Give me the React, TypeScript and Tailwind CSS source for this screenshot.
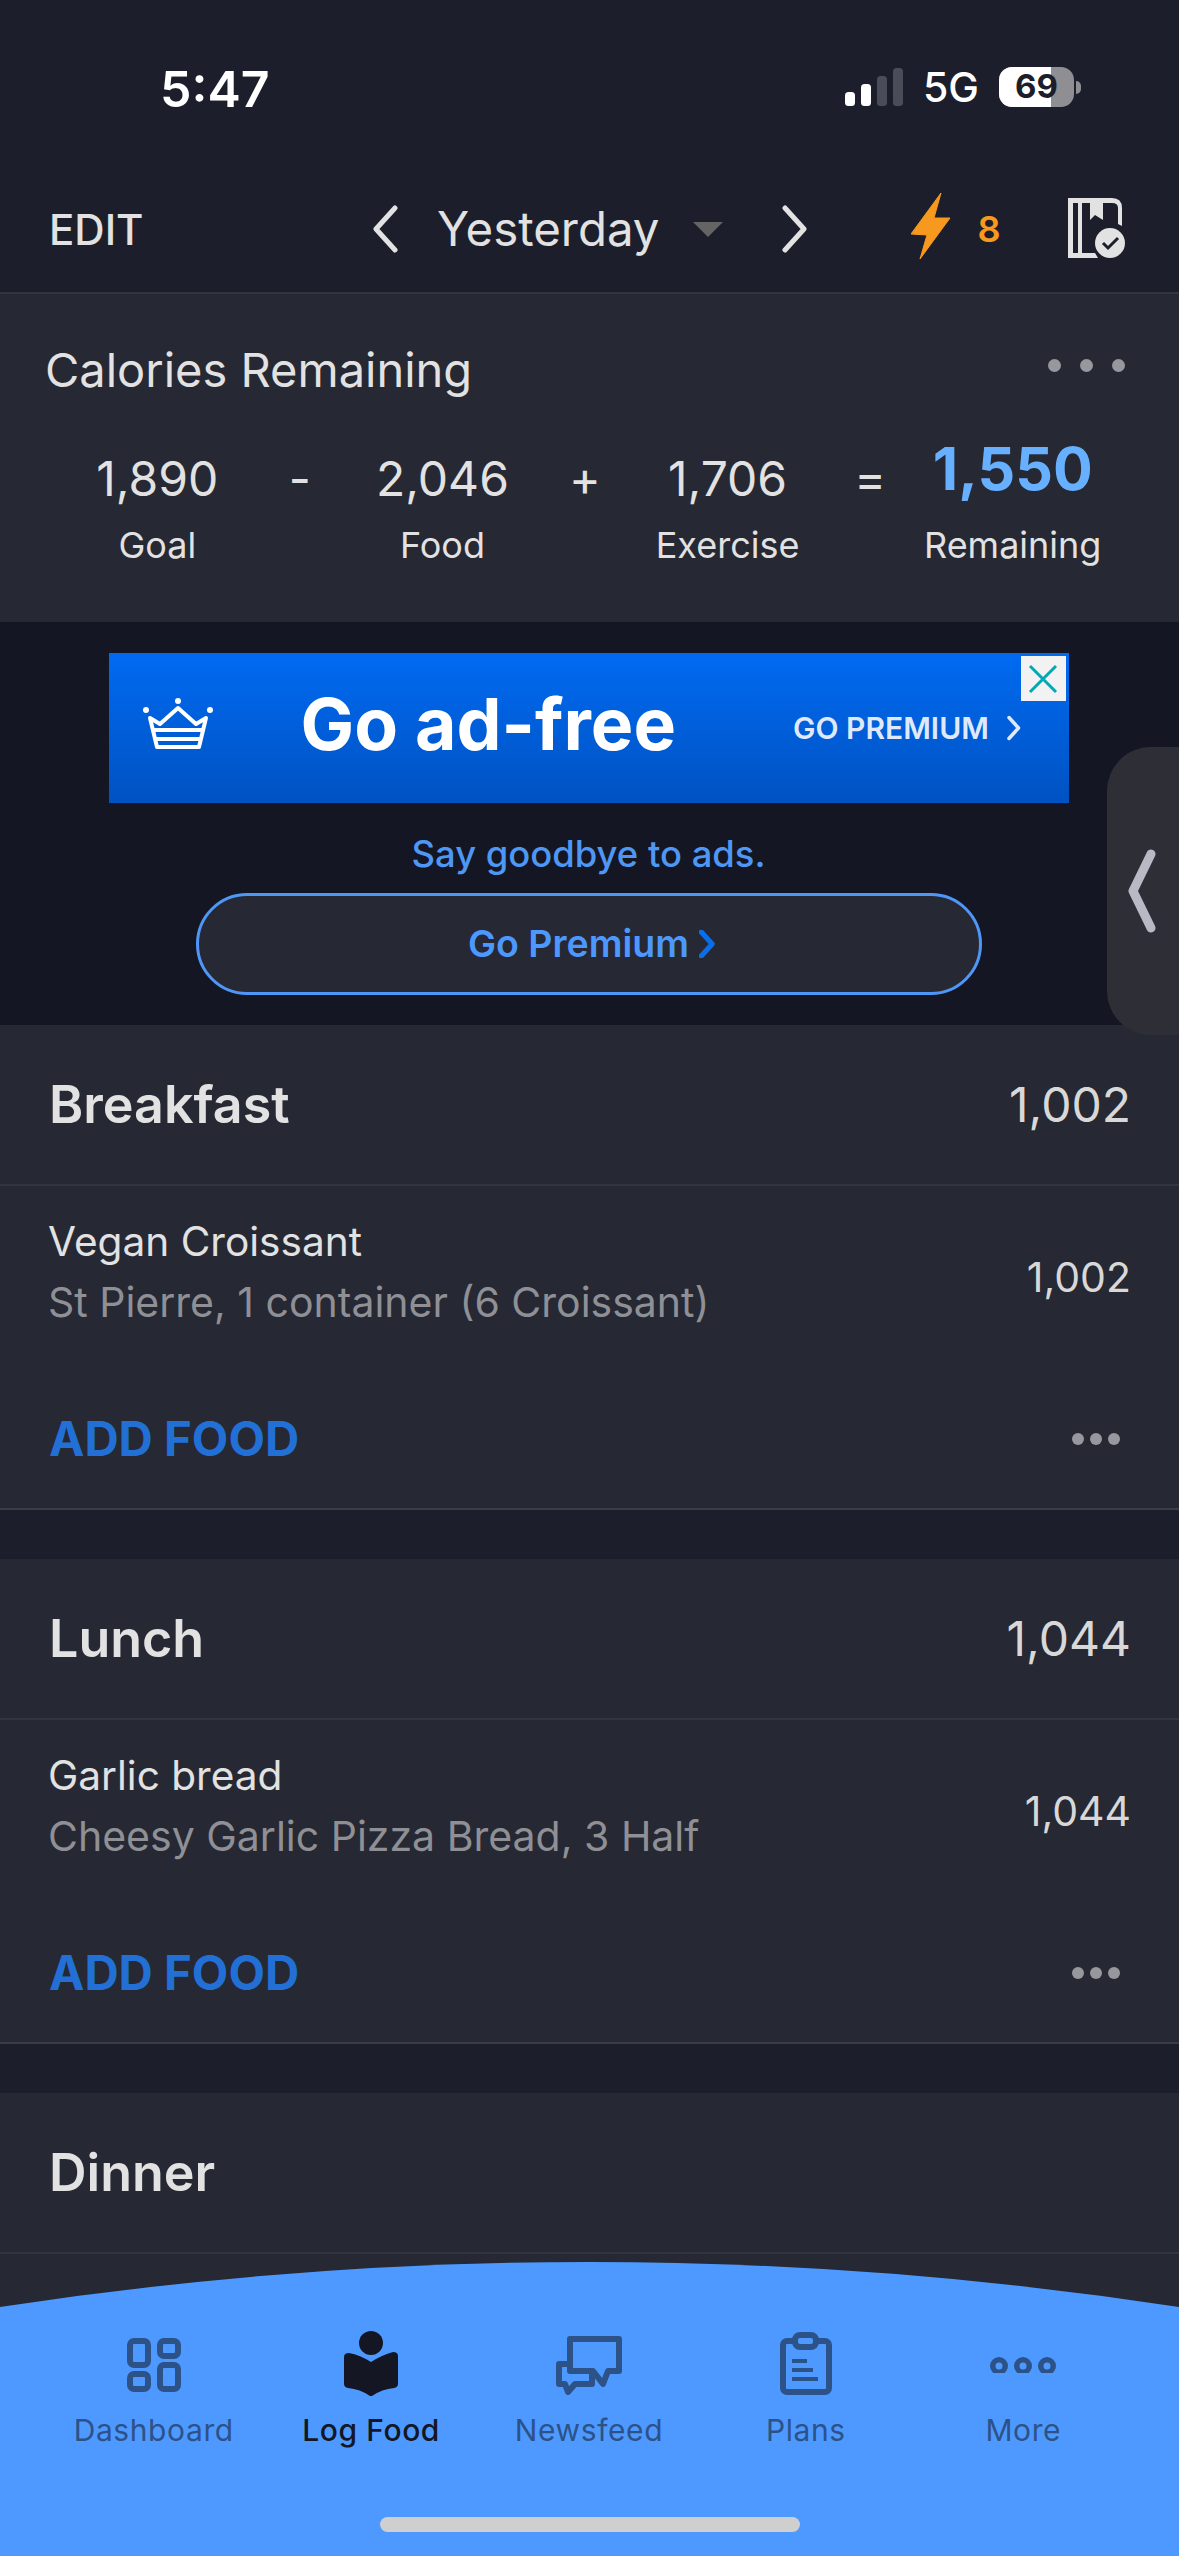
import React from "react";

const meals = [
  { name: "Breakfast", total: "1,002", food: "Vegan Croissant", detail: "St Pierre, 1 container (6 Croissant)", cals: "1,002" },
  { name: "Lunch", total: "1,044", food: "Garlic bread", detail: "Cheesy Garlic Pizza Bread, 3 Half", cals: "1,044" },
];

const summary = [
  { value: "1,890", label: "Goal" },
  { value: "-" },
  { value: "2,046", label: "Food" },
  { value: "+" },
  { value: "1,706", label: "Exercise" },
  { value: "=" },
  { value: "1,550", label: "Remaining", hot: true },
];

function Chevron({ flip, width = 5, className }: { flip?: boolean; width?: number; className?: string }) {
  return (
    <svg width="28" height="48" viewBox="0 0 28 48" className={className}>
      <path d={flip ? "M4 3 L23 24 L4 45" : "M24 3 L5 24 L24 45"} fill="none" stroke="currentColor" strokeWidth={width} strokeLinecap="round" strokeLinejoin="round" />
    </svg>
  );
}

function StatusBar() {
  return (
    <div className="h-[136px] flex items-start justify-between pt-[62px] pl-[160px] pr-[98px] text-white">
      <span className="text-[50px] leading-[54px] font-semibold">5:47</span>
      <div className="flex items-center gap-[20px] h-[50px]">
        <svg width="58" height="38" viewBox="0 0 58 38">
          <rect x="0" y="24" width="10" height="14" rx="3.5" fill="#fff" />
          <rect x="16" y="16" width="10" height="22" rx="3.5" fill="#fff" />
          <rect x="32" y="8" width="10" height="30" rx="3.5" fill="#4a4c57" />
          <rect x="48" y="0" width="10" height="38" rx="3.5" fill="#4a4c57" />
        </svg>
        <span className="text-[41px] leading-none font-medium">5G</span>
        <div className="flex items-center gap-[2px]">
          <div className="relative w-[75px] h-[40px] rounded-[13px] overflow-hidden bg-[#8e8e93]">
            <div className="h-full w-[52px] bg-white" />
            <span className="absolute inset-0 flex items-center justify-center text-[33px] font-bold text-[#1c1f2b]">69</span>
          </div>
          <div className="w-[5px] h-[13px] rounded-r-full bg-[#8e8e93]" />
        </div>
      </div>
    </div>
  );
}

function NavHeader() {
  return (
    <div className="h-[158px] border-b-2 border-[#32343e] flex items-center pt-[30px] pl-[49px] pr-[52px] text-[#e2e2e2]">
      <span className="text-[42px] font-medium w-[322px]">EDIT</span>
      <Chevron />
      <span className="text-[47.4px] ml-[38px]">Yesterday</span>
      <div className="ml-[34px] w-0 h-0 border-l-[15px] border-r-[15px] border-t-[15px] border-l-transparent border-r-transparent border-t-[#646464]" />
      <Chevron flip className="ml-[58px]" />
      <svg width="44" height="66" viewBox="0 0 44 66" className="ml-[102px] mb-[6px]" fill="#f7981f">
        <path d="M30 0 L0 41 L16 42 L9 66 L39 25 L23 25 Z" stroke="#f7981f" strokeWidth="1" strokeLinejoin="round" />
      </svg>
      <span className="text-[36px] font-semibold text-[#f7981f] ml-[22px] w-[92px]">8</span>
      <svg width="58" height="60" viewBox="0 0 58 60" fill="#e2e2e2" className="-ml-[1px] mb-[2px]">
        <path d="M0 0 H44 Q54 0 54 10 V28 L50 26 V10 Q50 5 44 5 H35 V22 L27 17 L22 22 V5 H14 V55 H27 L30 60 H0 Z M5 5 V55 H10 V5 Z" fillRule="evenodd" />
        <circle cx="42" cy="45" r="15" />
        <path d="M35 45 L40 50 L50 40" fill="none" stroke="#1c1f2b" strokeWidth="3" />
      </svg>
    </div>
  );
}

function CaloriesCard() {
  return (
    <div className="h-[328px] bg-[#262833] pl-[45px] pr-[54px] pt-[48px]">
      <div className="flex items-center justify-between">
        <span className="text-[47px] leading-[56px] text-[#e2e2e2]">Calories Remaining</span>
        <div className="flex gap-[19px] mb-[10px]">
          <div className="w-[13px] h-[13px] rounded-full bg-[#97989e]" />
          <div className="w-[13px] h-[13px] rounded-full bg-[#97989e]" />
          <div className="w-[13px] h-[13px] rounded-full bg-[#97989e]" />
        </div>
      </div>
      <div className="grid grid-cols-7 w-[998px] ml-[41px] mt-[45px]">
        {summary.map((s) => (
          <div key={s.value} className="flex flex-col items-center">
            <span className={s.hot ? "h-[72px] -mt-[10px] mb-[10px] text-[59px] leading-[72px] font-bold text-[#67b0ff]" : "h-[72px] text-[48px] leading-[72px] text-[#e2e2e2]"}>
              {s.value}
            </span>
            {s.label && <span className="mt-[8px] text-[36px] leading-[44px] text-[#e2e2e2]">{s.label}</span>}
          </div>
        ))}
      </div>
    </div>
  );
}

function AdBlock() {
  return (
    <div className="h-[403px] bg-[#141723] pt-[31px] pr-[2px] flex flex-col items-center">
      <div className="relative w-[960px] h-[150px] bg-gradient-to-b from-[#006bf2] to-[#0052c2] flex items-center">
        <svg width="70" height="52" viewBox="0 0 70 52" className="ml-[34px] mb-[8px]" fill="none" stroke="#fff" strokeWidth="4">
          <path d="M7 20 L17 26 L35 10 L53 26 L63 20 L56 49 H14 Z" strokeLinejoin="round" />
          <path d="M11 32 H59 M12 41 H58" />
          <circle cx="35" cy="3" r="3" fill="#fff" stroke="none" />
          <circle cx="3" cy="12" r="3" fill="#fff" stroke="none" />
          <circle cx="67" cy="12" r="3" fill="#fff" stroke="none" />
        </svg>
        <span className="ml-[88px] mb-[6px] text-[71.5px] font-bold text-white leading-none">Go ad-free</span>
        <span className="ml-[117px] text-[30px] font-semibold text-[#dfe9fb]">GO PREMIUM</span>
        <Chevron flip width={7} className="ml-[18px] w-[14px] h-[26px] text-[#dfe9fb]" />
        <div className="absolute top-[3px] right-[3px] w-[45px] h-[45px] bg-[#f2f2f2] flex items-center justify-center">
          <svg width="32" height="32" viewBox="0 0 32 32">
            <path d="M3 3 L29 29 M29 3 L3 29" stroke="#00a9b5" strokeWidth="3" />
          </svg>
        </div>
      </div>
      <span className="mt-[29px] text-[36.4px] leading-[44px] font-medium text-[#4f97f5]">Say goodbye to ads.</span>
      <div className="mt-[17px] w-[786px] h-[102px] pl-[6px] rounded-full border-[3px] border-[#4f97f7] bg-[#262833] flex items-center justify-center gap-[10px]">
        <span className="text-[37.5px] font-semibold text-[#4d98ff]">Go Premium</span>
        <Chevron flip width={9} className="w-[16px] h-[28px] text-[#0a6ee8]" />
      </div>
    </div>
  );
}

function Dots() {
  return (
    <div className="flex gap-[6px]">
      <div className="w-[12px] h-[12px] rounded-full bg-[#97989e]" />
      <div className="w-[12px] h-[12px] rounded-full bg-[#97989e]" />
      <div className="w-[12px] h-[12px] rounded-full bg-[#97989e]" />
    </div>
  );
}

function MealHeader({ name, total }: { name: string; total?: string }) {
  return (
    <div className="h-[161px] border-b-2 border-[#32343e] flex items-center justify-between pl-[49px] pr-[48px]">
      <span className="text-[52px] font-semibold text-[#e2e2e2]">{name}</span>
      {total && <span className="text-[48px] text-[#d8d8d8]">{total}</span>}
    </div>
  );
}

function Meal({ meal }: { meal: (typeof meals)[number] }) {
  return (
    <div className="h-[485px] bg-[#262833] border-b-2 border-[#3a3c46] mb-[49px]">
      <MealHeader name={meal.name} total={meal.total} />
      <div className="h-[182px] flex items-center justify-between pl-[48px] pr-[48px] pb-[10px]">
        <div className="flex flex-col">
          <span className="text-[40.6px] leading-[60px] text-[#e2e2e2]">{meal.food}</span>
          <span className="text-[41px] leading-[60px] text-[#8e9096]">{meal.detail}</span>
        </div>
        <span className="text-[41px] mt-[12px] text-[#d8d8d8]">{meal.cals}</span>
      </div>
      <div className="flex items-center justify-between pl-[49px] pr-[59px] pt-[26px]">
        <span className="text-[47.4px] leading-[90px] font-bold text-[#2270d6]">ADD FOOD</span>
        <Dots />
      </div>
    </div>
  );
}

function TabBar() {
  const idle = "#2d5288";
  const dark = "#141723";
  return (
    <div className="absolute left-0 bottom-0 w-full h-[294px] overflow-hidden">
      <svg width="1179" height="294" viewBox="0 0 1179 294" className="absolute inset-0">
        <path d="M0 45 Q589.5 -45 1179 45 V294 H0 Z" fill="#4d99ff" />
      </svg>
      <div className="relative grid grid-cols-5 w-[1087px] ml-[45px] pt-[68px] text-[30px] leading-[40px] tracking-[0.6px]">
        <div className="flex flex-col items-center" style={{ color: idle }}>
          <svg width="54" height="66" viewBox="0 0 54 66" fill="none" stroke={idle} strokeWidth="6">
            <rect x="3" y="11" width="18" height="24" rx="4" />
            <rect x="3" y="44" width="18" height="15" rx="4" />
            <rect x="33" y="11" width="18" height="15" rx="4" />
            <rect x="33" y="35" width="18" height="24" rx="4" />
          </svg>
          <span className="mt-[14px]">Dashboard</span>
        </div>
        <div className="flex flex-col items-center font-medium" style={{ color: dark }}>
          <svg width="54" height="66" viewBox="0 0 54 66" fill={dark}>
            <circle cx="27" cy="13" r="12" />
            <path d="M0 27 Q0 23 5 23 Q16 25 27 32 Q38 25 49 22 Q54 22 54 26 V54 Q54 57 50 58 Q38 59 28 66 H26 Q16 59 4 58 Q0 57 0 54 Z" />
          </svg>
          <span className="mt-[14px]">Log Food</span>
        </div>
        <div className="flex flex-col items-center" style={{ color: idle }}>
          <svg width="66" height="66" viewBox="0 0 66 66" fill="none" stroke={idle} strokeWidth="6" strokeLinejoin="round" className="ml-[2px]">
            <path d="M14 9 H63 V41 H52 L47 54 L37 41 H14 Z" />
            <path d="M14 34 H3 V54 H9 L12 62 L19 54 H36 V44" />
          </svg>
          <span className="mt-[14px] ml-[1px]">Newsfeed</span>
        </div>
        <div className="flex flex-col items-center" style={{ color: idle }}>
          <svg width="52" height="66" viewBox="0 0 52 66" fill="none" stroke={idle} strokeWidth="6">
            <rect x="3" y="11" width="46" height="51" rx="4" />
            <rect x="15" y="5" width="21" height="12" rx="5" fill="#4d99ff" />
            <path d="M12 31 H27 M12 40 H33 M12 49 H38" strokeWidth="4" />
          </svg>
          <span className="mt-[14px]">Plans</span>
        </div>
        <div className="flex flex-col items-center" style={{ color: idle }}>
          <svg width="68" height="66" viewBox="0 0 68 66" fill={idle}>
            <clipPath id="moreClip">
              <rect x="0" y="0" width="68" height="43" />
            </clipPath>
            <g clipPath="url(#moreClip)">
              <path fillRule="evenodd" d="M1 36 a9 9 0 1 0 18 0 a9 9 0 1 0 -18 0 Z M6.5 36 a3.5 3.5 0 1 0 7 0 a3.5 3.5 0 1 0 -7 0 Z" />
              <path fillRule="evenodd" d="M25 36 a9 9 0 1 0 18 0 a9 9 0 1 0 -18 0 Z M30.5 36 a3.5 3.5 0 1 0 7 0 a3.5 3.5 0 1 0 -7 0 Z" />
              <path fillRule="evenodd" d="M49 36 a9 9 0 1 0 18 0 a9 9 0 1 0 -18 0 Z M54.5 36 a3.5 3.5 0 1 0 7 0 a3.5 3.5 0 1 0 -7 0 Z" />
            </g>
          </svg>
          <span className="mt-[14px]">More</span>
        </div>
      </div>
      <div className="absolute left-[380px] bottom-[24px] w-[420px] h-[15px] rounded-full bg-[#cfcfcf]" />
    </div>
  );
}

export default function App() {
  return (
    <div className="relative w-[1179px] h-[2556px] overflow-hidden bg-[#1c1f2b] font-['Inter',sans-serif]">
      <StatusBar />
      <NavHeader />
      <CaloriesCard />
      <AdBlock />
      {meals.map((m) => (
        <Meal key={m.name} meal={m} />
      ))}
      <div className="bg-[#262833] h-[500px]">
        <MealHeader name="Dinner" />
      </div>
      <div className="absolute right-0 top-[747px] w-[72px] h-[288px] rounded-l-[44px] bg-[#2e2f36] flex items-center pl-[20px] text-[#b9b9c5]">
        <svg width="30" height="84" viewBox="0 0 30 84">
          <path d="M24 5 L6 42 L24 79" fill="none" stroke="currentColor" strokeWidth="9" strokeLinecap="round" strokeLinejoin="round" />
        </svg>
      </div>
      <TabBar />
    </div>
  );
}
